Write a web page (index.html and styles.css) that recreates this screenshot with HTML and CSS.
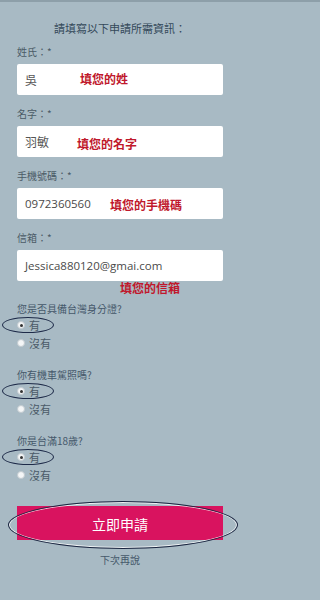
FILE: index.html
```html
<!DOCTYPE html>
<html lang="zh-Hant">
<head>
<meta charset="utf-8">
<title>申請</title>
<link rel="stylesheet" href="styles.css">
</head>
<body>
<div class="page">
  <div class="title">請填寫以下申請所需資訊：</div>

  <div class="field">
    <div class="label">姓氏：*</div>
    <div class="input"><span class="value">吳</span></div>
    <span class="note note-1">填您的姓</span>
  </div>

  <div class="field">
    <div class="label">名字：*</div>
    <div class="input"><span class="value">羽敏</span></div>
    <span class="note note-2">填您的名字</span>
  </div>

  <div class="field">
    <div class="label">手機號碼：*</div>
    <div class="input"><span class="value latin">0972360560</span></div>
    <span class="note note-3">填您的手機碼</span>
  </div>

  <div class="field">
    <div class="label">信箱：*</div>
    <div class="input"><span class="value latin">Jessica880120@gmai.com</span></div>
    <span class="note note-4">填您的信箱</span>
  </div>

  <div class="group group-first">
    <div class="question">您是否具備台灣身分證?</div>
    <div class="option"><span class="radio checked"></span><span class="opt-text">有</span><span class="circle-mark"></span></div>
    <div class="option"><span class="radio"></span><span class="opt-text">沒有</span></div>
  </div>

  <div class="group">
    <div class="question">你有機車駕照嗎?</div>
    <div class="option"><span class="radio checked"></span><span class="opt-text">有</span><span class="circle-mark"></span></div>
    <div class="option"><span class="radio"></span><span class="opt-text">沒有</span></div>
  </div>

  <div class="group">
    <div class="question">你是台滿18歲?</div>
    <div class="option"><span class="radio checked"></span><span class="opt-text">有</span><span class="circle-mark"></span></div>
    <div class="option"><span class="radio"></span><span class="opt-text">沒有</span></div>
  </div>

  <div class="submit-wrap">
    <div class="submit">立即申請</div>
    <span class="submit-mark"></span>
  </div>
  <div class="later">下次再說</div>
</div>
</body>
</html>
```

FILE: styles.css
```css
html, body {
  margin: 0;
  padding: 0;
}
body {
  background: #a8bac4;
  font-family: "Noto Sans CJK TC", "Noto Sans", sans-serif;
  border-top: 2px solid #8d9fa9;
  min-height: 598px;
}
.page {
  width: 241px;
  box-sizing: border-box;
  padding: 19px 18px 0 17px;
  position: relative;
}
.title {
  font-size: 11px;
  line-height: 14px;
  color: #34495a;
  text-align: center;
  margin-bottom: 11px;
}
.field {
  position: relative;
  margin-bottom: 13px;
}
.label {
  font-size: 10px;
  line-height: 12px;
  color: #4b5a66;
  margin-bottom: 6px;
}
.input {
  background: #fff;
  height: 31px;
  border-radius: 2px;
  display: flex;
  align-items: center;
  padding-left: 8px;
}
.value {
  font-size: 12px;
  color: #555;
}
.value.latin {
  font-family: "Open Sans", sans-serif;
  font-size: 11.5px;
  color: #4a4a4a;
}
.note {
  position: absolute;
  font-size: 12px;
  line-height: 14px;
  font-weight: bold;
  color: #c0182c;
  white-space: nowrap;
}
.note-1 { left: 63px; top: 26px; }
.note-2 { left: 60px; top: 29px; }
.note-3 { left: 93px; top: 28px; }
.note-4 { left: 103px; top: 49px; }

.group {
  margin-top: 17px;
}
.group-first {
  margin-top: 22px;
}
.question {
  font-size: 10px;
  line-height: 12px;
  color: #45586a;
}
.option {
  position: relative;
  height: 18px;
  display: flex;
  align-items: center;
  margin-top: 1px;
}
.option + .option {
  margin-top: 0;
}
.radio {
  width: 6px;
  height: 6px;
  border-radius: 50%;
  background: #f4f6f7;
  border: 1px solid #c3cbd0;
  display: flex;
  align-items: center;
  justify-content: center;
  box-sizing: content-box;
}
.radio.checked::after {
  content: "";
  width: 3px;
  height: 3px;
  border-radius: 50%;
  background: #333;
}
.opt-text {
  font-size: 11px;
  line-height: 14px;
  color: #4b5b68;
  margin-left: 4px;
}
.circle-mark {
  position: absolute;
  left: -15px;
  top: 1px;
  width: 50px;
  height: 14px;
  border: 1px solid #1d2a48;
  border-radius: 50%;
}
.submit-wrap {
  position: relative;
  margin-top: 22px;
}
.submit {
  background: #d9135f;
  height: 34px;
  display: flex;
  align-items: center;
  justify-content: center;
  color: #fff;
  font-size: 14px;
  padding-top: 2px;
  box-sizing: border-box;
}
.submit-mark {
  position: absolute;
  left: -9px;
  top: -5px;
  width: 228px;
  height: 46px;
  border: 1px solid #1a2540;
  border-radius: 50%;
  box-shadow: inset 0 0 0 1px rgba(255,255,255,0.8);
}
.later {
  margin-top: 14px;
  text-align: center;
  font-size: 10px;
  line-height: 12px;
  color: #45586a;
}
```
